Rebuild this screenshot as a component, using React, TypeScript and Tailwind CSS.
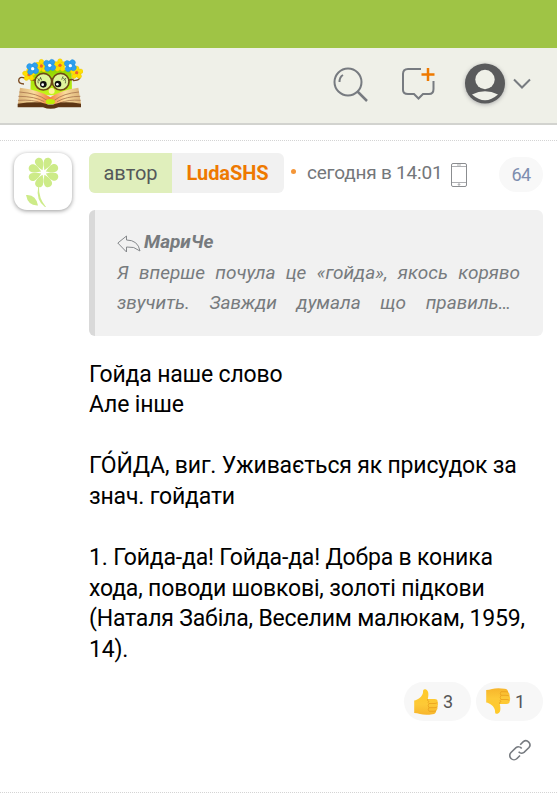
const crown: { x: number; y: number; blue: boolean }[] = [
  { x: 36, y: 50, blue: false },
  { x: 179, y: 44, blue: false },
  { x: 73, y: 24, blue: false },
  { x: 129, y: 22, blue: false },
  { x: 47, y: 32, blue: true },
  { x: 98, y: 22, blue: true },
  { x: 160, y: 23, blue: true },
];
const fivePetals = [0, 72, 144, 216, 288];
const fourPetals = [35, 125, 215, 305];

function Logo() {
  return (
    <svg className="block h-[51px] w-[66px]" viewBox="0 0 198 153">
      <defs>
        <linearGradient id="pages" x1="0" x2="1">
          <stop offset="0" stopColor="#d9b177" />
          <stop offset=".25" stopColor="#fbdc9d" />
          <stop offset=".5" stopColor="#f4813c" />
          <stop offset=".75" stopColor="#fbdc9d" />
          <stop offset="1" stopColor="#d9b177" />
        </linearGradient>
        <linearGradient id="face" x1="0" x2="0" y1="0" y2="1">
          <stop offset="0" stopColor="#8fd400" />
          <stop offset="1" stopColor="#c8f51c" />
        </linearGradient>
      </defs>
      <path d="M24 60Q6 54 5 67Q5 78 21 78M168 68Q186 67 189 59" fill="none" stroke="#7b4a20" strokeWidth="4" />
      <path d="M42 38Q100 30 164 38L165 112H40Z" fill="url(#face)" />
      <path d="M9 89Q70 96 100 118Q130 96 184 89L192 138H3Z" fill="url(#pages)" />
      <path d="M7 102Q62 106 90 127M4 115Q54 115 82 131M3 127Q48 124 74 135M186 102Q139 106 112 127M190 115Q148 115 120 131M191 127Q154 124 128 135" fill="none" stroke="#a97750" strokeWidth="2.5" />
      <path d="M2 137Q62 129 86 137Q100 142 116 137Q140 129 192 137V148H124Q101 157 78 148H2Z" fill="#5d3514" />
      <ellipse cx="100" cy="131" rx="14" ry="8" fill="#c0ee08" />
      <g stroke="#6d4815" strokeWidth="5" fill="#dff49c">
        <circle cx="79" cy="71" r="25" />
        <circle cx="131" cy="71" r="25" />
        <path d="M102 64q3-3 6 0M55 66L41 66M155 66l15-2" fill="none" />
      </g>
      <path d="M64 76Q60 64 72 61M69 70L62 61M74 67L70 57M145 76Q148 64 138 60M140 68L147 60M134 65L138 55" fill="none" stroke="#55613a" strokeWidth="2.5" />
      <circle cx="79" cy="79" r="10" fill="#101010" />
      <circle cx="123" cy="78" r="10" fill="#101010" />
      <circle cx="77" cy="80" r="4" fill="#fff" />
      <circle cx="121" cy="79" r="4" fill="#fff" />
      <circle cx="104" cy="99" r="9" fill="#fff29a" />
      {crown.map(({ x, y, blue }) => (
        <g key={x} transform={`translate(${x} ${y})`}>
          {(blue ? fourPetals : fivePetals).map((a) => (
            <ellipse
              key={a}
              cy="-10"
              rx={blue ? 9 : 7.5}
              ry="10"
              transform={`rotate(${a})`}
              fill={blue ? "#2fa0ee" : "#ffe000"}
              stroke={blue ? "#1687dc" : "#e0b800"}
              strokeWidth="1"
            />
          ))}
          <circle r="5" fill={blue ? "#ffffff" : "#f0642c"} />
        </g>
      ))}
    </svg>
  );
}

function FlowerAvatar() {
  return (
    <svg className="h-[58px] w-[58px]" viewBox="0 0 58 58">
      <g fill="#cdeb88">
        {[22, 67, 112, 157, 202, 247, 292, 337].map((a) => (
          <path key={a} transform={`translate(29.5 19.5) rotate(${a})`} d="M0-2.5C-1.5-5-4-8-4-11.5C-4-17 4-17 4-11.5C4-8 1.5-5 0-2.5Z" />
        ))}
        <path d="M24.2 34Q21.5 47 31 54H32Q24.5 45 25 34ZM12 42Q22 41 24 52.5Q14 53 12 42Z" />
      </g>
    </svg>
  );
}

function Thumb({ down = false }: { down?: boolean }) {
  return (
    <svg className={down ? "-mt-[2px] h-[28px] w-[26px] -scale-y-100" : "h-[28px] w-[26px]"} viewBox="0 0 26 28">
      <defs>
        <linearGradient id="skin" x1="0" x2="0" y1="0" y2="1">
          <stop offset="0" stopColor="#ffca28" />
          <stop offset=".6" stopColor="#fdc937" />
          <stop offset="1" stopColor="#f7b52c" />
        </linearGradient>
      </defs>
      <path d="M1.2 12.5C5 12 9.5 8.5 10 4.5C10 1.5 10.5 1 12.5 1.2C15.5 2 16 6 14.8 11H21.5Q25 11 24.6 14Q25.8 16.500 24.500 18.500Q25 21.500 23.300 22.500Q23 26 19.500 26.300Q12 27.500 7 26Q4 25.200 1.200 25Z" fill="url(#skin)" />
      <path d="M24.400 14.500Q23.500 15.600 21 15.500H16M24.300 18.700Q23.500 19.800 21 19.700H16M23.200 22.600Q22.500 23.400 20 23.300H16M14.800 11Q13.500 12.500 16 13.500Q14.300 14.500 16 15.500Q14.300 17.500 16 19.700Q14.500 21.500 16 23.300" fill="none" stroke="#eba41f" strokeWidth=".9" />
    </svg>
  );
}

function Reaction({ down, count }: { down?: boolean; count: number }) {
  return (
    <button className="flex h-[39px] w-[67px] items-center rounded-full bg-[#f7f7f7] pl-[9px] text-[18px] text-[#555]">
      <Thumb down={down} />
      <span className="ml-[4px] -mt-px">{count}</span>
    </button>
  );
}

export default function App() {
  return (
    <div className="h-[800px] w-[557px] overflow-hidden bg-white font-[Roboto,sans-serif] text-black">
      <div className="h-[48px] bg-[#9fc445]" />
      <header className="flex h-[77px] items-start border-b-2 border-[#d2d3cf] bg-[#eff0e8] pt-[10px] pl-[17px]">
        <Logo />
        <svg className="mt-[9px] ml-[250px] h-[36px] w-[36px]" viewBox="0 0 36 36" fill="none" stroke="#777b80" strokeWidth="2">
          <circle cx="15" cy="15" r="13.5" />
          <path d="M24.500 24.500L34 34" strokeWidth="2.500" />
          <path d="M6.500 15Q6.500 10 10 8" />
        </svg>
        <svg className="mt-[9px] ml-[32px] h-[36px] w-[34px]" viewBox="0 0 34 36" fill="none" strokeWidth="2">
          <path d="M20 2H7Q2 2 2 7V23Q2 27 7 27H13L17.500 31.500L22 27H28Q32.500 27 32.500 22V14" stroke="#777b80" />
          <path d="M27 1V14M20.500 7.500H33.500" stroke="#ee7900" strokeWidth="2.500" />
        </svg>
        <svg className="mt-[5px] ml-[29px] h-[42px] w-[42px] drop-shadow-[0_1px_2px_#aaa]" viewBox="0 0 42 42">
          <circle cx="21" cy="20.500" r="20" fill="#5a5b5c" />
          <circle cx="21" cy="16.500" r="9.700" fill="#eff0e8" />
          <path d="M8 31.500Q21 25 34 31.500Q21 43 8 31.500Z" fill="#eff0e8" />
        </svg>
        <svg className="mt-[20px] ml-[7px] h-[12px] w-[18px]" viewBox="0 0 18 12" fill="none" stroke="#777b80" strokeWidth="2">
          <path d="M1 1.500L9 9.500L17 1.500" />
        </svg>
      </header>
      <article className="mt-[15px] flex h-[653px] border-y border-dotted border-[#d4d4d4] pt-[12px] pl-[14px]">
        <div className="h-[57px] w-[58px] shrink-0 rounded-[13px] bg-white shadow-[0_1px_4px_#999]">
          <FlowerAvatar />
        </div>
        <div className="ml-[17px] w-[454px]">
          <div className="flex h-[40px] items-center">
            <div className="flex h-[40px] w-[195px] overflow-hidden rounded-[6px] bg-[#f1f1f1] text-[20px] leading-[40px]">
              <span className="w-[83px] bg-[#e0efbc] text-center text-[#55585a]">автор</span>
              <span className="flex-1 pr-px text-center font-bold tracking-[-0.1px] text-[#ee7900]">LudaSHS</span>
            </div>
            <span className="mb-[4px] ml-[7px] h-[5px] w-[5px] rounded-full bg-[#f49638]" />
            <time className="ml-[11px] w-[135px] text-[19px] tracking-[-0.2px] whitespace-nowrap text-[#74777a]">сегодня в 14:01</time>
            <svg className="mt-[4px] ml-[9px] h-[24px] w-[16px]" viewBox="0 0 16 24" fill="none" stroke="#8b8d90">
              <rect x=".5" y=".5" width="15" height="23" rx="1.500" />
              <path d="M.5 3.500h15M.5 19.500h15" strokeWidth=".7" />
              <path d="M6 2h4" strokeWidth=".7" />
              <circle cx="8" cy="21.500" r=".8" strokeWidth=".8" />
            </svg>
            <span className="mt-[3px] ml-auto flex h-[35px] w-[44px] items-center justify-center rounded-full bg-[#f8f8f8] text-[18px] tracking-[-0.5px] text-[#7d8daf]">64</span>
          </div>
          <blockquote className="mt-[17px] h-[126px] rounded-[6px] border-l-[6px] border-[#d9d9d9] bg-[#f1f1f1] pt-[17px] pr-[23px] pl-[22px] text-[19px] leading-[30.5px] text-[#777b7e] italic">
            <div className="flex items-center font-bold">
              <svg className="mt-[3px] mr-[3px] h-[18px] w-[24px]" viewBox="0 0 24 18" fill="none" stroke="#85888b">
                <path d="M.8 8L9.500 1V5Q21 5 23 16Q17 11 9.500 12V17Z" />
              </svg>
              МариЧе
            </div>
            <div className="flex justify-between">
              <span>Я</span> <span>вперше</span> <span>почула</span> <span>це</span> <span>«гойда»,</span> <span>якось</span> <span>коряво</span>
            </div>
            <div className="mr-[9px] flex justify-between">
              <span>звучить.</span> <span>Завжди</span> <span>думала</span> <span>що</span> <span>правиль…</span>
            </div>
          </blockquote>
          <div className="mt-[23.500px] h-[306px] text-[23px] leading-[30.600px] tracking-[-0.170px] whitespace-nowrap">
            <p>Гойда наше слово<br />Але інше</p>
            <p className="mt-[30.600px]">ГО́ЙДА, виг. Уживається як присудок за<br />знач. гойдати</p>
            <p className="mt-[30.600px]">1. Гойда-да! Гойда-да! Добра в коника<br />хода, поводи шовкові, золоті підкови<br />(Наталя Забіла, Веселим малюкам, 1959,<br />14).</p>
          </div>
          <div className="mt-[16.500px] flex justify-end gap-[5px]">
            <Reaction count={3} />
            <Reaction count={1} down />
          </div>
          <svg className="mt-[18px] ml-[420px] h-[22px] w-[22px]" viewBox="0 0 22 22" fill="none" stroke="#777b80" strokeWidth="1.600">
            <path d="M11.200 5.800L14.300 2.700A4.100 4.100 0 0 1 20 8.500L15 13.300A4.100 4.100 0 0 1 9.600 12.700" />
            <path d="M11 16.500L8 19.500A4.100 4.100 0 0 1 2 13.500L7 8.700A4.100 4.100 0 0 1 12.700 9.500" />
          </svg>
        </div>
      </article>
    </div>
  );
}
